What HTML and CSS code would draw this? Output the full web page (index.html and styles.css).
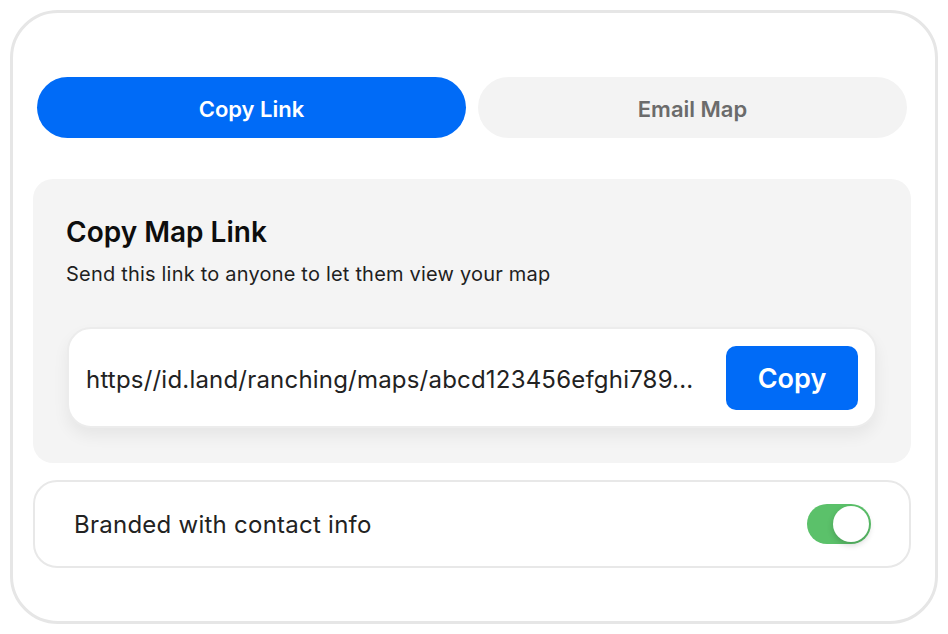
FILE: index.html
```html
<!DOCTYPE html>
<html lang="en">
<head>
<meta charset="utf-8">
<title>Share Map</title>
<link rel="stylesheet" href="styles.css">
</head>
<body>
<div class="card">
  <div class="tabs">
    <button class="tab tab-active">Copy Link</button>
    <button class="tab">Email Map</button>
  </div>
  <section class="panel">
    <h2 class="panel-title">Copy Map Link</h2>
    <p class="panel-sub">Send this link to anyone to let them view your map</p>
    <div class="link-box">
      <span class="link-text">https//id.land/ranching/maps/abcd123456efghi789...</span>
      <button class="copy-btn">Copy</button>
    </div>
  </section>
  <div class="option-row">
    <span class="option-label">Branded with contact info</span>
    <span class="toggle"><span class="knob"></span></span>
  </div>
</div>
</body>
</html>
```

FILE: styles.css
```css
* { box-sizing: border-box; }
html, body { margin: 0; padding: 0; background: #ffffff; }
body {
  font-family: Inter, "Noto Sans", "Liberation Sans", sans-serif;
  color: #1f1f1f;
  width: 948px;
  height: 634px;
  padding: 10px;
}
.card {
  width: 928px;
  height: 614px;
  border: 3px solid #e6e6e6;
  border-radius: 48px;
  padding: 64px 24px 0 20px;
  background: #fff;
}
.tabs {
  display: flex;
  gap: 12px;
  margin: 0 4px;
}
.tab {
  flex: 1;
  height: 61px;
  border: none;
  border-radius: 31px;
  background: #f3f3f3;
  color: #6b6b6b;
  font-family: inherit;
  font-size: 22px;
  font-weight: 600;
  padding: 3px 0 0;
}
.tab-active {
  background: #006bf7;
  color: #ffffff;
}
.panel {
  margin-top: 41px;
  background: #f4f4f4;
  border-radius: 20px;
  padding: 36px 34px 35px 33px;
}
.panel-title {
  margin: 0;
  font-size: 28px;
  line-height: 34px;
  font-weight: 600;
  color: #0d0d0d;
}
.panel-sub {
  margin: 12px 0 0;
  font-size: 20px;
  line-height: 26px;
  letter-spacing: 0.2px;
  color: #1f1f1f;
}
.link-box {
  margin-top: 40px;
  margin-left: 1px;
  height: 101px;
  background: #fff;
  border: 2px solid #ececec;
  border-radius: 24px;
  box-shadow: 0 8px 16px rgba(0, 0, 0, 0.06);
  display: flex;
  align-items: center;
  justify-content: space-between;
  padding: 0 17px 0 17px;
}
.link-text {
  font-size: 24px;
  letter-spacing: 0.2px;
  color: #222;
  white-space: nowrap;
  padding-top: 3px;
}
.copy-btn {
  width: 132px;
  height: 64px;
  border: none;
  border-radius: 10px;
  background: #006bf7;
  color: #fff;
  font-family: inherit;
  font-size: 27px;
  font-weight: 600;
  padding: 2px 0 0;
}
.option-row {
  margin-top: 17px;
  height: 88px;
  border: 2px solid #e8e8e8;
  border-radius: 24px;
  display: flex;
  align-items: center;
  justify-content: space-between;
  padding: 0 38px 0 39px;
}
.option-label {
  font-size: 24px;
  letter-spacing: 0.25px;
  color: #222;
  padding-top: 1px;
}
.toggle {
  position: relative;
  width: 64px;
  height: 40px;
  border-radius: 20px;
  background: #5bc16a;
}
.knob {
  position: absolute;
  top: 2px;
  right: 2px;
  width: 36px;
  height: 36px;
  border-radius: 50%;
  background: #fff;
  box-shadow: 0 3px 6px rgba(0, 0, 0, 0.18);
}
```
